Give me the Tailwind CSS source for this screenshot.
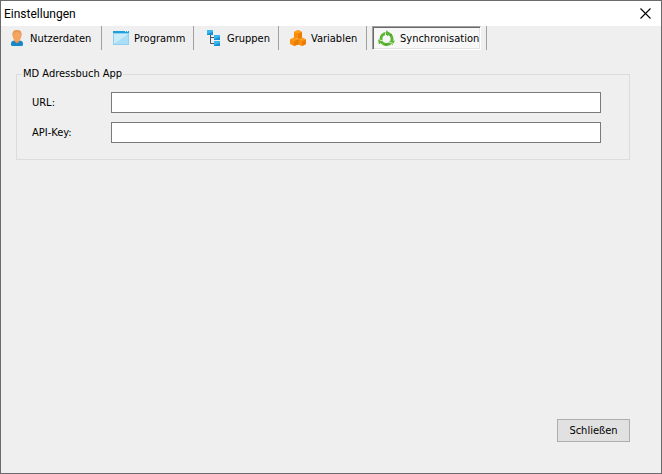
<!DOCTYPE html>
<html lang="de">
    <head>
        <meta charset="utf-8" />
        <title>Einstellungen</title>
        <meta name="viewport" content="width=device-width, initial-scale=1.0">
        <script src="https://cdn.jsdelivr.net/npm/@tailwindcss/browser@4"></script>
    </head>
    <body class="min-h-screen flex flex-col bg-[#efefef] border border-[#6b696b] text-black text-[11px] leading-4 font-['DejaVu_Sans_Condensed','Noto_Sans',sans-serif]">
        <header class="flex h-[25px] items-center justify-between bg-white pl-[3px] pr-[10px]">
            <h1 class="text-[12px] font-['Roboto','Open_Sans',sans-serif]">Einstellungen</h1>
            <button type="button" aria-label="Fenster schließen">
                <svg class="size-[11px]" viewBox="0 0 11 11" fill="none" stroke="#000" stroke-width="1.1">
                    <path d="M.5.5l10 10M10.5.5l-10 10" />
                </svg>
            </button>
        </header>

        <nav role="tablist" class="flex h-6 whitespace-nowrap">
            <button type="button" role="tab" class="flex w-[101px] items-center gap-[5px] border-r border-[#a0a0a0] pl-2">
                <svg class="size-4 shrink-0" viewBox="0 0 16 16">
                    <path d="M2 14.500v-1Q2 11 5 10.500h6q3 .5 3 3v1q0 1.500-1.500 1.500h-9Q2 16 2 14.500z" fill="#1787c9" />
                    <path d="M5.500 9h5v2.500L8 13.500l-2.500-2z" fill="#e08f45" />
                    <path d="M3.700 3.500Q4 0 8 0t4.300 3.500Q13 5 12.200 7 11 11.500 8 11.500T3.800 7Q3 5 3.700 3.500z" fill="#f3a561" />
                    <path d="M3.500 4Q3.500 0 8 0t4.500 4v1.500Q11.500 2 8 2T3.500 5.500z" fill="#e59a55" />
                </svg>
                <span class="pt-px">Nutzerdaten</span>
            </button>
            <button type="button" role="tab" class="flex w-[92px] items-center gap-[5px] border-r border-[#a0a0a0] pl-[11px]">
                <svg class="size-4 shrink-0" viewBox="0 0 16 16">
                    <path d="M0 1h16v14H0z" fill="#8fd0ee" />
                    <path d="M1 4h14v10H1z" fill="#a9def6" />
                    <path d="M1 4h14L1 14z" fill="#c9ecfa" />
                    <path d="M0 1h16v2H0z" fill="#1e9fdd" />
                    <path d="M12 1h1v1h-1zM14 1h1v1h-1z" fill="#c9ecfa" />
                </svg>
                <span class="pt-px">Programm</span>
            </button>
            <button type="button" role="tab" class="flex w-[85px] items-center gap-[5px] border-r border-[#a0a0a0] pl-3">
                <svg class="size-4 shrink-0" viewBox="0 0 16 16">
                    <path d="M4.500 5v8.500H8M4.500 7.500H8" fill="none" stroke="#4b5560" />
                    <path d="M1 0h6v5H1zM8 5h6v5H8zM8 11h6v5H8z" fill="#1590d4" />
                    <path d="M1 0h6v2L1 4zM8 5h6v2L8 9zM8 11h6v2l-6 2z" fill="#38b6ef" />
                </svg>
                <span class="pt-px">Gruppen</span>
            </button>
            <button type="button" role="tab" class="flex w-[88px] items-center gap-[5px] border-r border-[#a0a0a0] pl-[11px]">
                <svg class="size-4 shrink-0" viewBox="0 0 16 16">
                    <path d="M4 8.500V2l4-2 4 2v6.500zM4 7.500l4 2v5L4 16l-4-2V9.500zM12 7.500l4 2V14l-4 2-4-1.500v-5z" fill="#f98e0b" />
                    <path d="M8 3.500L12 2v6L8 9.500zM4 11l4-1.500v5L4 16zM12 11l4-1.500V14l-4 2z" fill="#ec7c02" />
                    <path d="M8 0l4 2-4 1.500L4 2zM4 7.500l4 2L4 11 0 9.500zM12 7.500l4 2-4 1.500-4-1.500z" fill="#ff9c20" />
                    <path d="M8 9.500v5" fill="none" stroke="#d96f00" stroke-width=".6" />
                </svg>
                <span class="pt-px">Variablen</span>
            </button>
            <div class="flex w-[120px] border-r border-[#a0a0a0] px-[5px]">
                <button type="button" role="tab" aria-selected="true" class="flex grow items-center gap-[5px] border border-t-[#a0a0a0] border-l-[#a0a0a0] border-r-white border-b-white bg-[#f7f7f7] pl-[5px] shadow-[inset_1px_1px_0_#696969,inset_-1px_-1px_0_#e3e3e3]">
                    <svg class="size-[17px] shrink-0 mt-px" viewBox="0 0 17 17">
                        <circle cx="8.500" cy="9" r="5.600" fill="none" stroke="#5cb531" stroke-width="3" />
                        <path d="M8 0l4.500 3.500L9 6zM17 10.500L14.500 15l-4-3.500zM1 14.500L0 9.500l5 1.500z" fill="#5cb531" />
                        <path d="M7.500 2.500v3.500M15 13.500l-4-1.500M1.500 10l4 1" fill="none" stroke="#f7f7f7" stroke-width=".8" />
                        <path d="M12 5.500l2-1.500M8 13.500V16" fill="none" stroke="#3f9420" stroke-width=".8" />
                    </svg>
                    <span class="pt-px">Synchronisation</span>
                </button>
            </div>
        </nav>

        <main class="flex grow flex-col pt-4 pl-[15px] pr-[31px] pb-[31px]">
            <fieldset class="border border-[#dcdcdc] pt-[10px] pb-4 pl-[15px] pr-7">
                <legend class="-ml-[10px] px-px">MD Adressbuch App</legend>
                <div class="grid grid-cols-[79px_1fr] items-center gap-y-[9px]">
                    <label for="url">URL:</label>
                    <input id="url" type="text" class="h-[21px] min-w-0 border border-[#7a7a7a] bg-white px-1">
                    <label for="api-key">API-Key:</label>
                    <input id="api-key" type="text" class="h-[21px] min-w-0 border border-[#7a7a7a] bg-white px-1">
                </div>
            </fieldset>
            <button type="button" class="mt-auto h-[23px] w-[73px] self-end border border-[#adadad] bg-[#e1e1e1]">Schließen</button>
        </main>
    </body>
</html>
